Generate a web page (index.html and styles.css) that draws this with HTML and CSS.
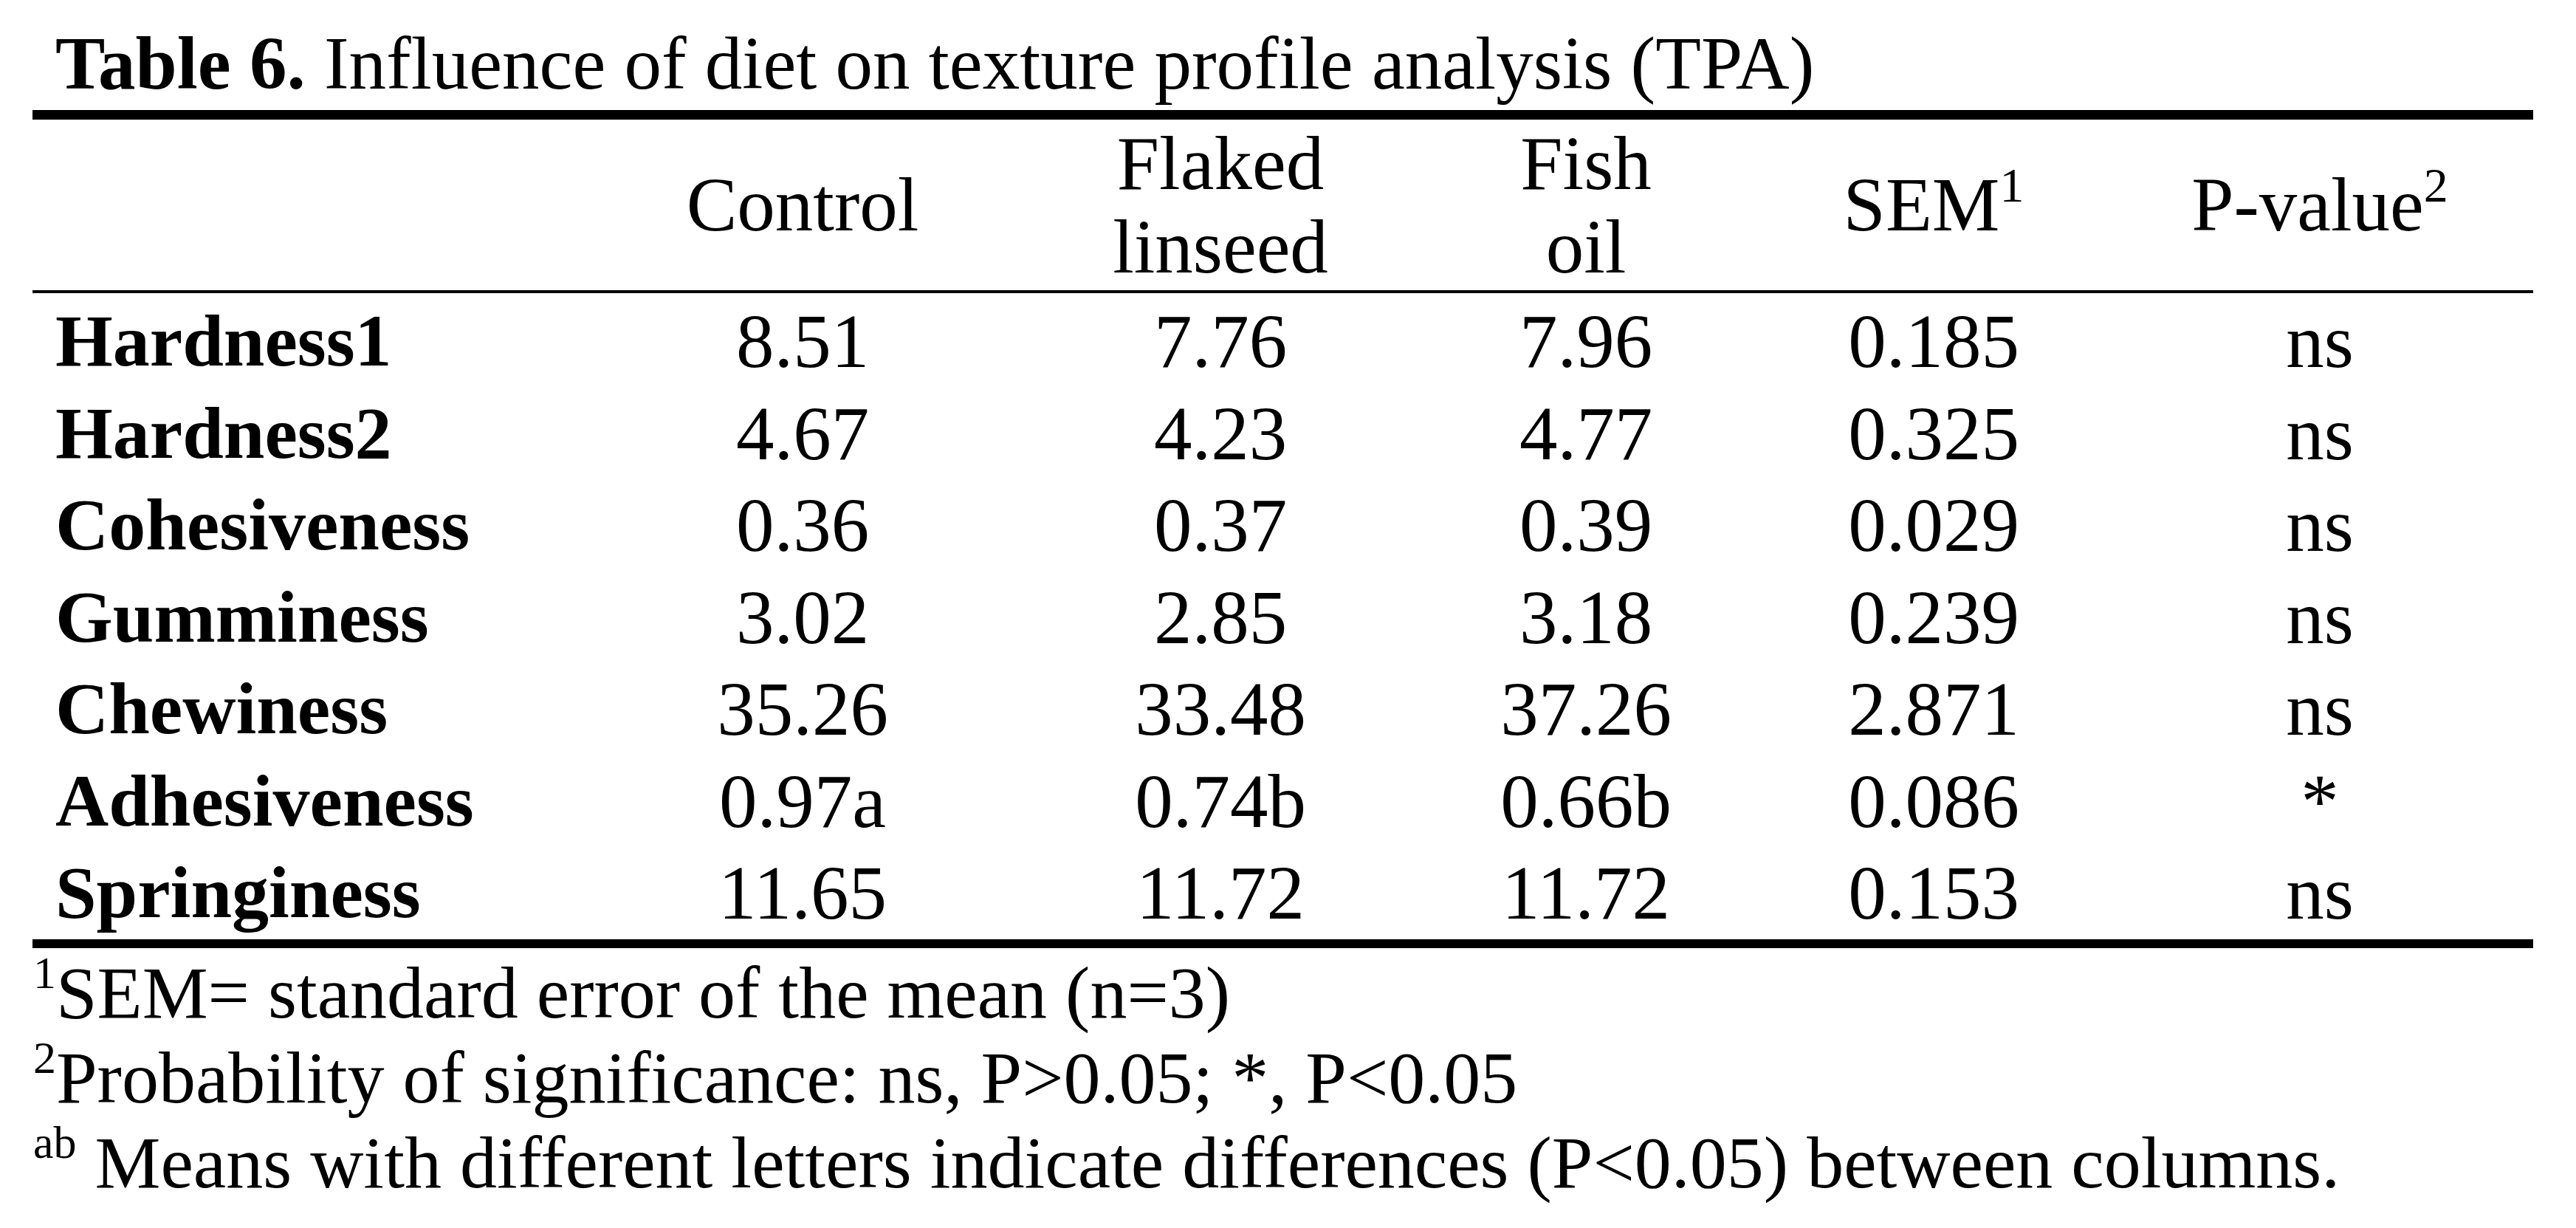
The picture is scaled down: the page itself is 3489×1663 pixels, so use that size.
FILE: index.html
```html
<!DOCTYPE html>
<html lang="en">
<head>
<meta charset="utf-8">
<title>Table 6. Influence of diet on texture profile analysis (TPA)</title>
<link rel="stylesheet" href="styles.css">
</head>
<body>
<div class="page">
  <p class="caption"><b>Table 6.</b> Influence of diet on texture profile analysis (TPA)</p>
  <div class="table">
    <div class="head">
      <div class="hcell"></div>
      <div class="hcell"><span class="htext">Control</span></div>
      <div class="hcell"><span class="htext">Flaked<br>linseed</span></div>
      <div class="hcell"><span class="htext">Fish<br>oil</span></div>
      <div class="hcell"><span class="htext">SEM<sup class="hsup">1</sup></span></div>
      <div class="hcell"><span class="htext">P-value<sup class="hsup">2</sup></span></div>
    </div>
    <div class="body">
      <div class="row"><div class="label">Hardness1</div><div class="val">8.51</div><div class="val">7.76</div><div class="val">7.96</div><div class="val">0.185</div><div class="val">ns</div></div>
      <div class="row"><div class="label">Hardness2</div><div class="val">4.67</div><div class="val">4.23</div><div class="val">4.77</div><div class="val">0.325</div><div class="val">ns</div></div>
      <div class="row"><div class="label">Cohesiveness</div><div class="val">0.36</div><div class="val">0.37</div><div class="val">0.39</div><div class="val">0.029</div><div class="val">ns</div></div>
      <div class="row"><div class="label">Gumminess</div><div class="val">3.02</div><div class="val">2.85</div><div class="val">3.18</div><div class="val">0.239</div><div class="val">ns</div></div>
      <div class="row"><div class="label">Chewiness</div><div class="val">35.26</div><div class="val">33.48</div><div class="val">37.26</div><div class="val">2.871</div><div class="val">ns</div></div>
      <div class="row"><div class="label">Adhesiveness</div><div class="val">0.97a</div><div class="val">0.74b</div><div class="val">0.66b</div><div class="val">0.086</div><div class="val">*</div></div>
      <div class="row"><div class="label">Springiness</div><div class="val">11.65</div><div class="val">11.72</div><div class="val">11.72</div><div class="val">0.153</div><div class="val">ns</div></div>
    </div>
  </div>
  <div class="notes">
    <p class="note"><sup class="nsup">1</sup>SEM= standard error of the mean (n=3)</p>
    <p class="note"><sup class="nsup">2</sup>Probability of significance: ns, P&gt;0.05; *, P&lt;0.05</p>
    <p class="note"><sup class="nsup">ab</sup> Means with different letters indicate differences (P&lt;0.05) between columns.</p>
  </div>
</div>
</body>
</html>
```

FILE: styles.css
```css
html, body {
  margin: 0;
  padding: 0;
  background: #ffffff;
}

body {
  font-family: "Liberation Serif", "Times New Roman", serif;
  color: #000000;
}

.page {
  width: 3387px;
  padding: 24px 0 0 44px;
}

.caption {
  margin: 0;
  padding-left: 31px;
  font-size: 101px;
  line-height: 125px;
  white-space: nowrap;
}

.caption b {
  font-weight: 700;
}

.table {
  border-top: 13px solid #000;
  border-bottom: 12px solid #000;
}

.head,
.row {
  display: grid;
  grid-template-columns: 735px 616px 516px 474px 468px 578px;
}

.head {
  height: 231px;
  border-bottom: 4px solid #000;
}

.hcell {
  display: flex;
  align-items: center;
  justify-content: center;
  text-align: center;
  font-size: 103px;
  line-height: 113px;
}

.htext {
  display: block;
  white-space: nowrap;
}

.hsup {
  font-size: 66px;
  line-height: 0;
  vertical-align: 39px;
}

.body {
  padding-top: 3px;
}

.row {
  height: 124.5px;
  font-size: 103px;
  line-height: 124.5px;
}

.label {
  font-weight: 700;
  font-size: 100px;
  padding-left: 31px;
  white-space: nowrap;
}

.val {
  text-align: center;
  white-space: nowrap;
}

.notes {
  padding-top: 3px;
}

.note {
  margin: 0;
  padding-left: 1px;
  font-size: 100px;
  line-height: 115px;
  white-space: nowrap;
}

.nsup {
  font-size: 62px;
  line-height: 0;
  vertical-align: 40px;
}
```
